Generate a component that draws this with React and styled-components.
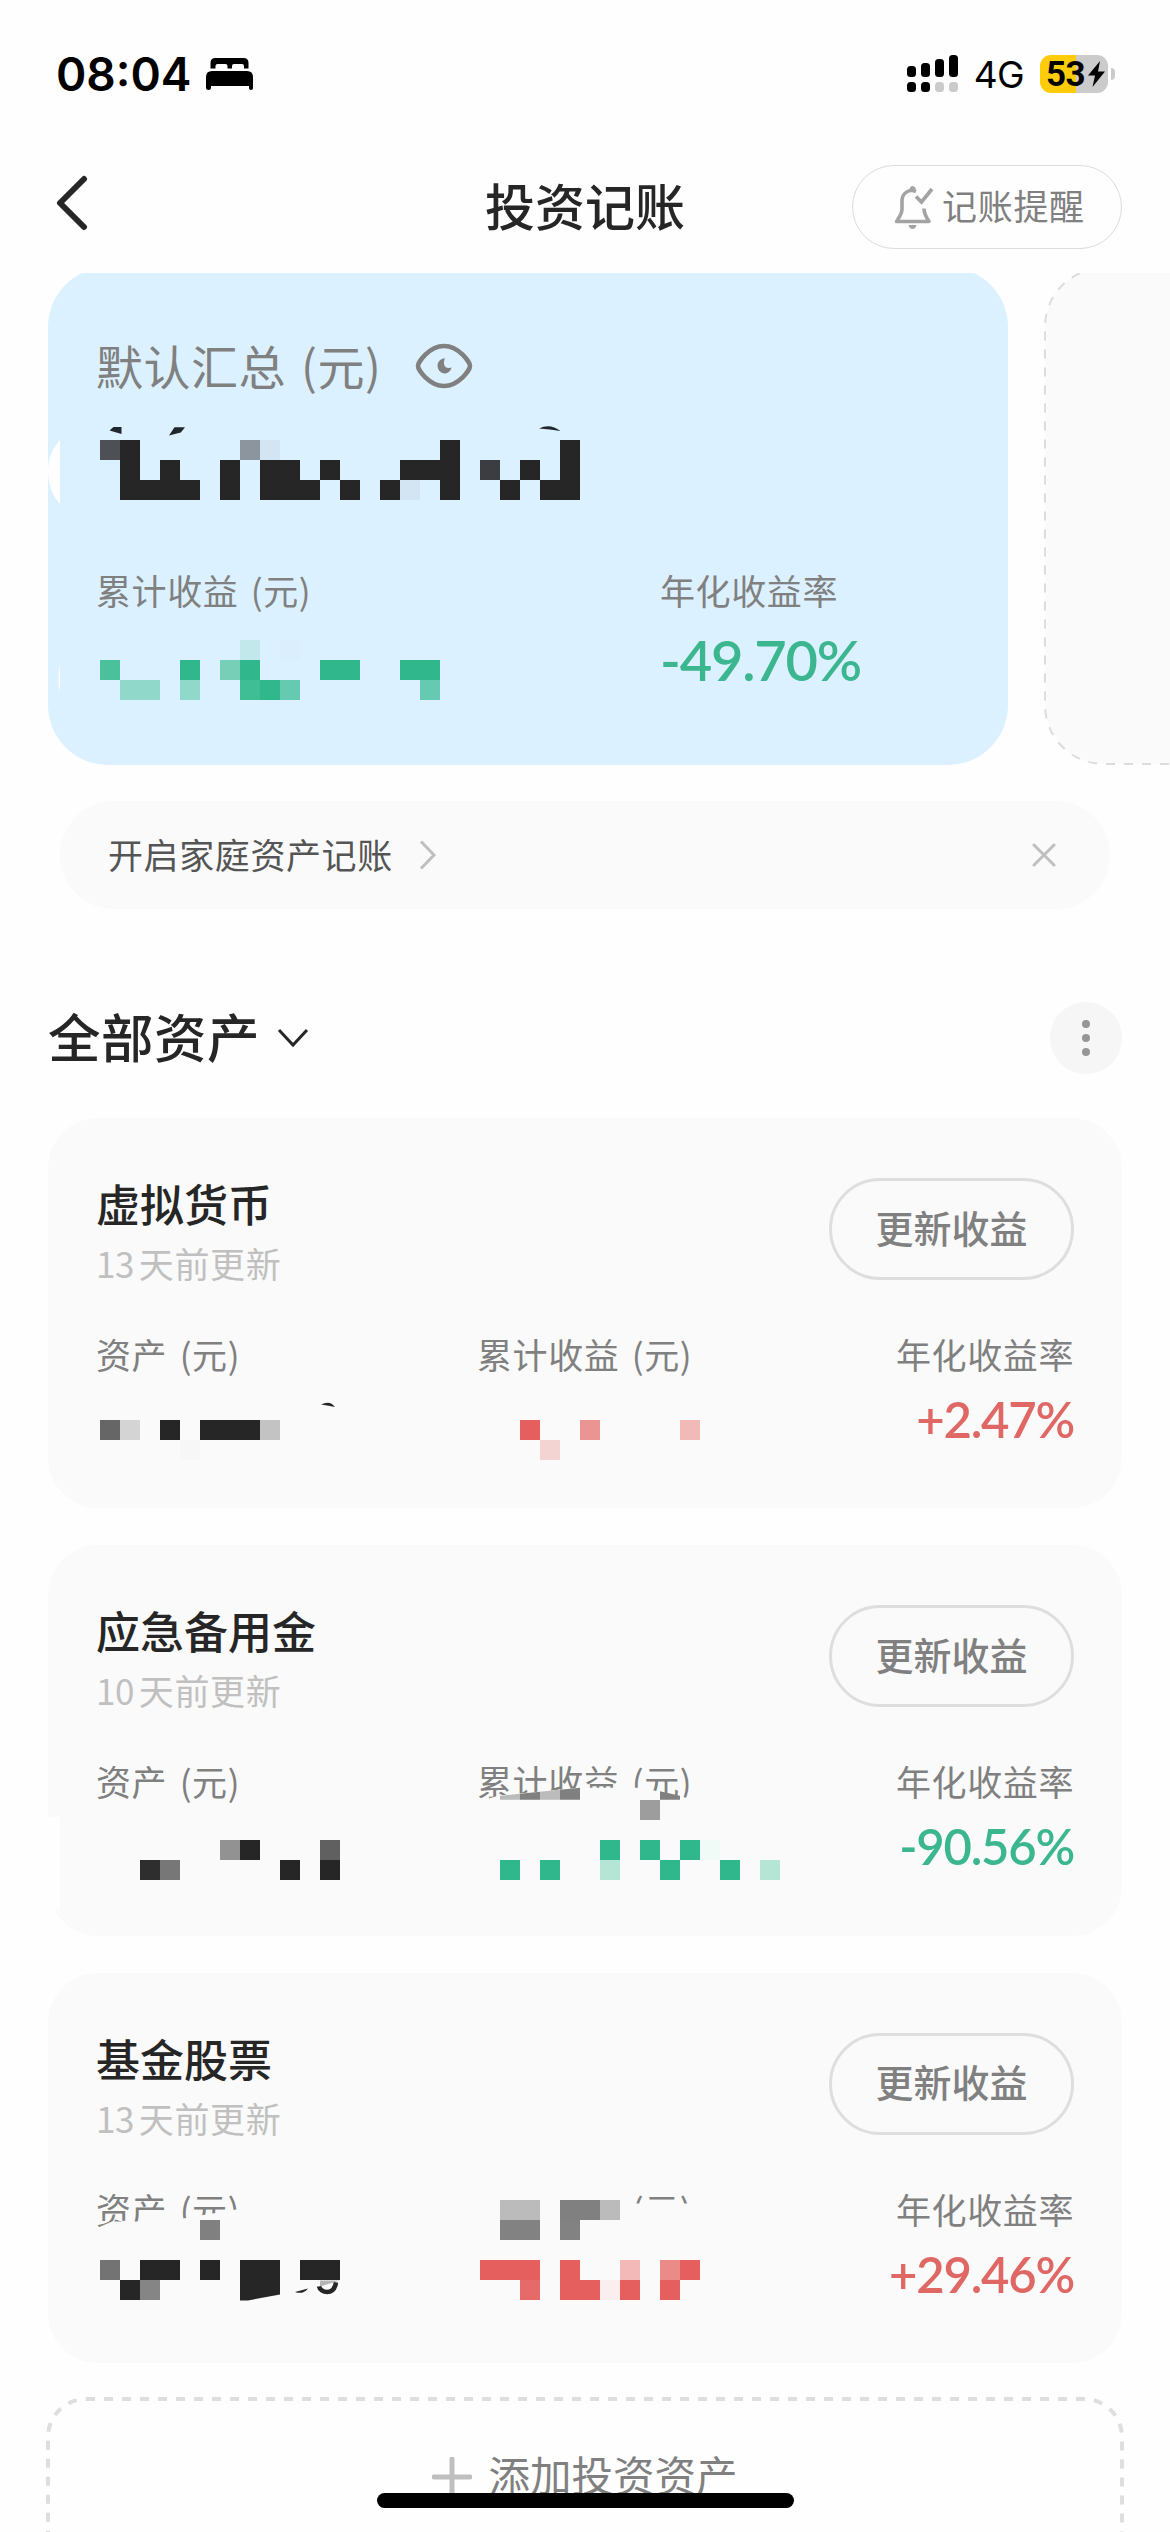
import React from 'react';
import styled, { createGlobalStyle } from 'styled-components';

const INK = '#262626';
const GREEN = '#30b88c';
const RED = '#e45f5e';

const GlobalStyle = createGlobalStyle`
    * {
        box-sizing: border-box;
    }
    body {
        margin: 0;
        background: #fefefe;
        font-family: "Noto Sans CJK SC", sans-serif;
        color: ${INK};
    }
`;

const Screen = styled.div`
    position: relative;
    width: 1170px;
    height: 2532px;
    overflow: hidden;
    background: #fefefe;
    svg {
        display: block;
        flex: none;
    }
`;

const StatusBar = styled.div`
    display: flex;
    align-items: center;
    justify-content: space-between;
    height: 150px;
    padding: 0 55px 2px 56px;
    color: #000;
    font-family: Inter, sans-serif;
`;

const StatusGroup = styled.div`
    display: flex;
    align-items: center;
    gap: ${props => props.$gap}px;
`;

const Clock = styled.span`
    font-size: 46px;
    font-weight: 600;
    line-height: 56px;
`;

const Network = styled.span`
    font-size: 37px;
    letter-spacing: -0.6px;
    line-height: 40px;
    padding-top: 2px;
`;

const Battery = styled.div`
    display: flex;
    align-items: center;
    gap: 3px;
`;

const BatteryBody = styled.div`
    display: flex;
    align-items: center;
    gap: 3px;
    width: 68px;
    height: 38px;
    padding-left: 6px;
    border-radius: 11px;
    background: linear-gradient(90deg, #ffcc0a 53%, #cbcbcb 53%);
    font-family: Roboto, sans-serif;
    font-size: 35px;
    font-weight: 700;
    letter-spacing: -0.6px;
`;

const BatteryTip = styled.div`
    width: 4px;
    height: 12px;
    border-radius: 0 5px 5px 0;
    background: #cbcbcb;
`;

const Header = styled.header`
    display: grid;
    grid-template-columns: 1fr auto 1fr;
    align-items: center;
    height: 114px;
    margin-bottom: 9px;
    padding: 0 48px;
    .header-back {
        margin: -8px 0 0 7px;
    }
`;

const Title = styled.h1`
    margin: 0;
    font-size: 50px;
    font-weight: 500;
    line-height: 70px;
    margin-top: -6px;
`;

const ReminderButton = styled.button`
    display: flex;
    align-items: center;
    justify-self: end;
    gap: 8px;
    width: 270px;
    height: 84px;
    padding: 0 0 0 41px;
    border: 1px solid #dcdcdc;
    border-radius: 42px;
    background: none;
    color: #808080;
    font-family: inherit;
    font-size: 35px;
    letter-spacing: 0.7px;
    line-height: 50px;
    white-space: nowrap;
    span {
        margin-top: -4px;
    }
`;

const Carousel = styled.div`
    display: flex;
    gap: 36px;
    height: 492px;
    padding-left: 48px;
    overflow: hidden;
`;

const SummaryCard = styled.section`
    position: relative;
    flex: none;
    width: 960px;
    height: 498px;
    margin-top: -6px;
    padding: 68px 48px 0;
    border-radius: 60px;
    background: #dcf1ff;
`;

const NextCard = styled.section`
    flex: none;
    width: 960px;
    height: 498px;
    margin-top: -6px;
`;

const SummaryTitle = styled.div`
    display: flex;
    align-items: center;
    gap: 34px;
    height: 60px;
    margin-bottom: 170px;
    color: #808080;
    font-size: 47px;
    letter-spacing: 0.5px;
    word-spacing: 4px;
    line-height: 60px;
    svg {
        margin-top: 1px;
    }
`;

const SummaryStats = styled.div`
    display: grid;
    grid-template-columns: 564px 1fr;
`;

const Stat = styled.div`
    text-align: ${props => (props.$end ? 'right' : 'left')};
`;

const Label = styled.div`
    color: #808080;
    font-size: 35px;
    letter-spacing: 0.6px;
    word-spacing: 4px;
    line-height: 50px;
    white-space: nowrap;
`;

const Rate = styled.div`
    padding-top: ${props => props.$drop || 0}px;
    color: ${props => props.$color};
    font-family: Lato, sans-serif;
    font-size: ${props => props.$size}px;
    font-weight: 600;
    letter-spacing: -1.2px;
    line-height: 80px;
    white-space: nowrap;
`;

// Covers a whole card, so that hidden amounts can be blocked out over it
const Mask = styled.svg`
    position: absolute;
    left: 0;
    top: 0;
    width: 100%;
    height: 100%;
`;

const Banner = styled.div`
    display: flex;
    align-items: center;
    height: 108px;
    margin: 36px 60px 0;
    padding: 0 54px 0 48px;
    border-radius: 54px;
    background: #fafafa;
    color: #555;
    font-size: 35px;
    letter-spacing: 0.6px;
    line-height: 50px;
    span {
        margin: -3px 26px 0 0;
    }
    .banner-close {
        margin-left: auto;
    }
`;

const SectionHeader = styled.div`
    display: flex;
    align-items: center;
    height: 72px;
    margin: 93px 48px 44px;
    h2 {
        margin: -6px 17px 0 0;
        font-size: 52.5px;
        font-weight: 500;
        letter-spacing: 0.5px;
        line-height: 72px;
    }
`;

const MoreButton = styled.button`
    display: flex;
    flex-direction: column;
    align-items: center;
    justify-content: center;
    gap: 6px;
    width: 72px;
    height: 72px;
    margin-left: auto;
    padding: 0;
    border: 0;
    border-radius: 50%;
    background: #f6f6f6;
    i {
        width: 8px;
        height: 8px;
        border-radius: 50%;
        background: #969696;
    }
`;

const AssetList = styled.div`
    display: flex;
    flex-direction: column;
    gap: 37px;
    padding: 0 48px;
`;

const AssetCard = styled.section`
    position: relative;
    height: 390.3px;
    padding: 60px 48px 0;
    border-radius: 50px;
    background: #fafafa;
`;

const AssetTop = styled.div`
    display: flex;
    justify-content: space-between;
    height: 151px;
`;

const AssetName = styled.div`
    margin-top: -4px;
    font-size: 44px;
    font-weight: 500;
    line-height: 58px;
`;

const Updated = styled.div`
    margin-top: 6px;
    color: #c0c0c0;
    font-size: 35px;
    letter-spacing: 0.6px;
    line-height: 50px;
    span {
        margin-right: 5px;
        letter-spacing: -0.5px;
    }
`;

const UpdateButton = styled.button`
    width: 245px;
    height: 102px;
    padding: 0 0 6px;
    border: 3px solid #dedede;
    border-radius: 51px;
    background: none;
    color: #808080;
    font-family: inherit;
    font-size: 38px;
    font-weight: 500;
`;

const AssetStats = styled.div`
    display: grid;
    grid-template-columns: 381px 1fr auto;
`;

const AddBox = styled.div`
    position: relative;
    display: flex;
    justify-content: center;
    height: 240px;
    margin: 34px 46px 0;
    padding-top: 47px;
    color: #808080;
    font-size: 41.5px;
    line-height: 60px;
    svg.add-plus {
        margin: 13px 16px 0 0;
    }
`;

const HomeIndicator = styled.div`
    position: absolute;
    left: 377px;
    bottom: 24px;
    width: 417px;
    height: 15px;
    border-radius: 8px;
    background: #000;
`;

// [top, colour, ...left edges]; every block is 20px square
function Blocks({ rows }) {
    return rows.map(([y, fill, ...xs]) => xs.map(x => (
        <rect key={`${x}-${y}`} x={x} y={y} width="20" height="20" fill={fill} shapeRendering="crispEdges" />
    )));
}

const summaryBlocks = [
    [440, '#4d5054', 100],
    [440, INK, 120, 440, 560],
    [440, '#8c959d', 240],
    [440, '#d3e5f3', 260],
    [460, INK, 120, 160, 220, 260, 280, 320, 400, 420, 440, 520, 560],
    [460, '#3c3d40', 480],
    [480, INK, 120, 140, 160, 180, 220, 260, 280, 300, 340, 380, 440, 500, 540, 560],
    [480, '#d3e5f3', 400],
    [640, '#c3e8ec', 240],
    [640, '#daeefc', 280],
    [660, '#4bc19b', 100],
    [660, GREEN, 180, 240, 320, 340, 400, 420],
    [660, '#78cfb8', 220],
    [680, '#90d9ca', 120, 140, 180],
    [680, '#3fbd95', 240],
    [680, GREEN, 260],
    [680, '#65cab0', 280, 420],
];

function SummaryMask() {
    return (
        <Mask viewBox="48 267 960 498">
            <path d="M60 440C52 449 48 459 48 471S52 496 60 504Z" fill="#fefefe" />
            <path d="M60 665C58 674 58 684 60 693Z" fill="#fefefe" />
            <g fill="#20262b">
                <path d="M109.600 430.500 113.500 427H121.500V434Z" />
                <path d="M169 435.500 174.500 427.300H185L180.800 432.500Z" />
                <path d="M539 428.500Q550 423 560.500 431Q550 429 539 428.500Z" />
            </g>
            <Blocks rows={summaryBlocks} />
        </Mask>
    );
}

const assets = [
    {
        name: '虚拟货币',
        days: 13,
        rate: '+2.47%',
        color: '#df6864',
        top: 1118,
        blocks: [
            [1420, '#666', 100],
            [1420, '#d4d4d4', 120],
            [1420, INK, 160, 200, 220, 240],
            [1420, '#c3c3c3', 260],
            [1440, '#f7f7f7', 180],
            [1420, RED, 520],
            [1420, '#ea9594', 580],
            [1420, '#f2b9b9', 680],
            [1440, '#f4d3d3', 540],
        ],
        over: <path d="M321 1404.500Q330 1400 335 1407Q329 1405.500 321 1404.500Z" fill={INK} />,
    },
    {
        name: '应急备用金',
        days: 10,
        rate: '-90.56%',
        color: '#3cb68f',
        top: 1545.3,
        under: (
            <>
                <path d="M48 1817H60V1911H54Q48 1900 48 1880Z" fill="#fefefe" />
                <path d="M488 1799 500 1795.500 580 1788H642L686 1798V1810H488Z" fill="#fafafa" />
                <path d="M500 1796 520 1794V1800H500ZM540 1792 560 1790V1800H540Z" fill="#bbb" />
                <path d="M520 1794 540 1792V1800H520ZM560 1790 580 1788V1800H560ZM660 1791.500 680 1796V1800H660Z" fill="#808080" />
            </>
        ),
        blocks: [
            [1800, '#9d9d9d', 640],
            [1840, '#929292', 220],
            [1840, INK, 240],
            [1840, '#606060', 320],
            [1860, '#2e2e2e', 140],
            [1860, '#777', 160],
            [1860, INK, 280, 320],
            [1840, GREEN, 600, 640, 680],
            [1840, '#f0faf7', 700],
            [1860, GREEN, 500, 540, 660, 720],
            [1860, '#b5e5d4', 600, 760],
        ],
    },
    {
        name: '基金股票',
        days: 13,
        rate: '+29.46%',
        color: '#df6864',
        top: 1972.6,
        under: (
            <>
                <path d="M96 2228 112 2221H165L242 2208V2234H96Z" fill="#fafafa" />
                <path d="M474 2188H630V2203H696V2236H474Z" fill="#fafafa" />
            </>
        ),
        blocks: [
            [2220, '#808080', 200],
            [2260, '#737373', 100],
            [2260, INK, 140, 160, 200, 240, 260, 300, 320],
            [2280, INK, 120],
            [2280, '#858585', 140],
            [2200, '#bbb', 500, 520, 600],
            [2200, '#808080', 560, 580],
            [2220, '#828282', 500, 520, 560],
            [2260, RED, 480, 500, 520, 560, 680],
            [2260, '#f3b9b9', 620],
            [2260, '#ea8b87', 660],
            [2280, '#e56a69', 520],
            [2280, RED, 560, 580, 620, 660],
            [2280, '#faeeef', 600],
        ],
        over: (
            <>
                <path d="M240 2279H280V2294L248 2300H240Z" fill={INK} />
                <path d="M320 2280H340L320 2286Z" fill="#b5b5b5" />
                <path d="M295 2291.500 308 2288Q303 2294.500 295 2291.500Z" fill={INK} />
                <path d="M319 2286C320 2292 334 2296 336 2282" fill="none" stroke={INK} strokeWidth="4.500" />
            </>
        ),
    },
];

function SleepIcon() {
    return (
        <svg width="47" height="32" viewBox="0 0 47 32">
            <path d="M4.500 10.500V5Q4.500 0 9.500 0H37.500Q42.500 0 42.500 5V10.500H38V8Q38 6 36 6H28Q26 6 26 8V10.500H21.500V8Q21.500 6 19.500 6H11.500Q9.500 6 9.500 8V10.500Z" />
            <path d="M0 19Q0 13 6 13H41Q47 13 47 19V30Q47 32 45 32T43 30V28H5V30Q5 32 2.500 32T0 30Z" />
        </svg>
    );
}

function SignalIcon() {
    return (
        <svg width="51" height="38" viewBox="0 0 51 38">
            <rect x="0" y="11" width="9" height="11" rx="3.500" />
            <rect x="14" y="8" width="9" height="14" rx="3.500" />
            <rect x="28" y="4" width="9" height="18" rx="3.500" />
            <rect x="42" y="0" width="9" height="22" rx="3.500" />
            <rect x="0" y="27" width="9" height="10" rx="3.500" />
            <rect x="14" y="27" width="9" height="10" rx="3.500" />
            <rect x="28" y="27" width="9" height="10" rx="3.500" fill="#cbcbcb" />
            <rect x="42" y="27" width="9" height="10" rx="3.500" fill="#cbcbcb" />
        </svg>
    );
}

function BellIcon() {
    return (
        <svg width="40" height="43" viewBox="0 0 40 43" fill="none" stroke="#a3a3a3" strokeWidth="3.600">
            <path d="M22 5.500C15 2.500 8 7 8 15V23C8 28 5.500 31 2.500 35.500H35C32 31 30 28 30 22.500" strokeLinejoin="round" />
            <path d="M22 10.500 27.500 16 38 3" />
            <path d="M15.500 3.500Q16 0 18.500 0T22 3.500Z" fill="#a3a3a3" stroke="none" />
            <path d="M14.500 39H22.500Q21.500 43 18.500 43T14.500 39Z" fill="#a3a3a3" stroke="none" />
        </svg>
    );
}

function EyeIcon() {
    return (
        <svg width="58" height="46" viewBox="0 0 58 46">
            <path
                d="M3 23C3 19.500 14 3 29 3S55 19.500 55 23 44 43 29 43 3 26.500 3 23Z"
                fill="none"
                stroke="#808080"
                strokeWidth="4.600"
            />
            <path d="M30 15.200C27.500 21 29.500 26.500 36.500 24.500C35.500 28.500 32.500 30.500 29 30.500A7.700 7.700 0 0 1 30 15.200Z" fill="#808080" />
        </svg>
    );
}

function App() {
    return (
        <Screen>
            <GlobalStyle />
            <StatusBar>
                <StatusGroup $gap={15}>
                    <Clock>08:04</Clock>
                    <SleepIcon />
                </StatusGroup>
                <StatusGroup $gap={16}>
                    <SignalIcon />
                    <Network>4G</Network>
                    <Battery>
                        <BatteryBody>
                            53
                            <svg width="17" height="26" viewBox="0 0 17 26">
                                <path d="M12 0 0 14.500H7L4.500 26 17 10.500H10Z" />
                            </svg>
                        </BatteryBody>
                        <BatteryTip />
                    </Battery>
                </StatusGroup>
            </StatusBar>

            <Header>
                <svg className="header-back" width="34" height="56" viewBox="0 0 34 56">
                    <path d="M29 4 5 28 29 52" fill="none" stroke={INK} strokeWidth="6" strokeLinecap="round" strokeLinejoin="round" />
                </svg>
                <Title>投资记账</Title>
                <ReminderButton>
                    <BellIcon />
                    <span>记账提醒</span>
                </ReminderButton>
            </Header>

            <Carousel>
                <SummaryCard>
                    <SummaryTitle>
                        默认汇总 (元)
                        <EyeIcon />
                    </SummaryTitle>
                    <SummaryStats>
                        <Stat>
                            <Label>累计收益 (元)</Label>
                        </Stat>
                        <Stat>
                            <Label>年化收益率</Label>
                            <Rate $size={56} $drop={5} $color="#3cb68f">-49.70%</Rate>
                        </Stat>
                    </SummaryStats>
                    <SummaryMask />
                </SummaryCard>
                <NextCard>
                    <svg width="960" height="498" viewBox="0 0 960 498">
                        <rect x="1" y="1" width="958" height="496" rx="59" fill="#fafafa" stroke="#dcdcdc" strokeWidth="2" strokeDasharray="9 9" />
                    </svg>
                </NextCard>
            </Carousel>

            <Banner>
                <span>开启家庭资产记账</span>
                <svg width="18" height="30" viewBox="0 0 18 30">
                    <path d="M2 1.500 15 15 2 28.500" fill="none" stroke="#bfbfbf" strokeWidth="3" />
                </svg>
                <svg className="banner-close" width="24" height="24" viewBox="0 0 24 24">
                    <path d="M2 2 22 22M22 2 2 22" stroke="#bfbfbf" strokeWidth="3" strokeLinecap="round" />
                </svg>
            </Banner>

            <SectionHeader>
                <h2>全部资产</h2>
                <svg width="32" height="20" viewBox="0 0 32 20">
                    <path d="M2 2 16 17 30 2" fill="none" stroke={INK} strokeWidth="3" />
                </svg>
                <MoreButton>
                    <i />
                    <i />
                    <i />
                </MoreButton>
            </SectionHeader>

            <AssetList>
                {assets.map(asset => (
                    <AssetCard key={asset.name}>
                        <AssetTop>
                            <div>
                                <AssetName>{asset.name}</AssetName>
                                <Updated><span>{asset.days}</span>天前更新</Updated>
                            </div>
                            <UpdateButton>更新收益</UpdateButton>
                        </AssetTop>
                        <AssetStats>
                            <Stat>
                                <Label>资产 (元)</Label>
                            </Stat>
                            <Stat>
                                <Label>累计收益 (元)</Label>
                            </Stat>
                            <Stat $end>
                                <Label>年化收益率</Label>
                                <Rate $size={49} $color={asset.color}>{asset.rate}</Rate>
                            </Stat>
                        </AssetStats>
                        <Mask viewBox={`48 ${asset.top} 1074 390.3`}>
                            {asset.under}
                            <Blocks rows={asset.blocks} />
                            {asset.over}
                        </Mask>
                    </AssetCard>
                ))}
            </AssetList>

            <AddBox>
                <Mask viewBox="0 0 1078 240">
                    <rect x="2" y="2" width="1074" height="300" rx="38" fill="none" stroke="#dedede" strokeWidth="4" strokeDasharray="9 9" />
                </Mask>
                <svg className="add-plus" width="40" height="40" viewBox="0 0 40 40">
                    <path d="M20 2V38M2 20H38" stroke="#bfbfbf" strokeWidth="5" strokeLinecap="round" />
                </svg>
                添加投资资产
            </AddBox>
            <HomeIndicator />
        </Screen>
    );
}

export default App;
